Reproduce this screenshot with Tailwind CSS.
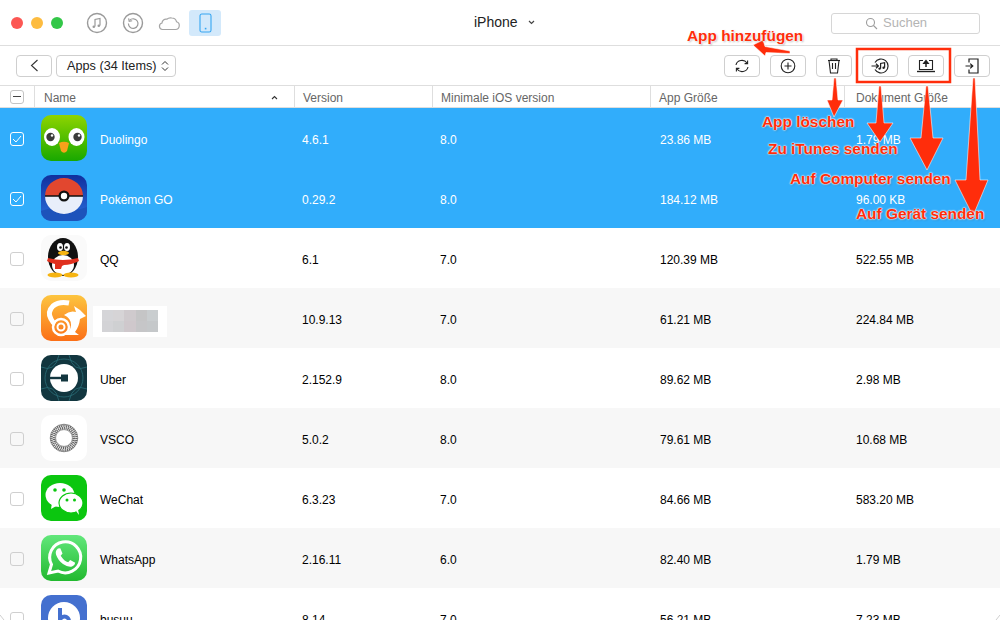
<!DOCTYPE html>
<html lang="de">
<head>
  <meta charset="UTF-8" />
  <title>iPhone Apps</title>
  <script src="https://cdn.jsdelivr.net/npm/@tailwindcss/browser@4"></script>
</head>
<body class="bg-white">
<div class="relative w-[1000px] h-[620px] overflow-hidden font-['Liberation_Sans',Arial,sans-serif] text-[12px] text-black">

  <!-- title bar -->
  <div class="h-[46px] flex items-center border-b border-[#dedede] pl-[11px] pr-[20px]">
    <div class="flex gap-[8px]">
      <span class="w-3 h-3 rounded-full bg-[#fc5753]"></span>
      <span class="w-3 h-3 rounded-full bg-[#fdbc40]"></span>
      <span class="w-3 h-3 rounded-full bg-[#33c748]"></span>
    </div>
    <div class="flex items-center ml-[21px] gap-[4px]">
      <svg class="w-[26px] h-[26px]" viewBox="0 0 26 26" fill="none" stroke="#9a9a9a">
        <circle cx="13" cy="13" r="9.5" stroke-width="1.4"/>
        <path d="M11 16.500V9.500l5-1v7" stroke-width="1.200"/>
        <circle cx="9.800" cy="16.700" r="1.300" fill="#9a9a9a" stroke="none"/>
        <circle cx="14.800" cy="15.700" r="1.300" fill="#9a9a9a" stroke="none"/>
      </svg>
      <svg class="ml-[6px] w-[26px] h-[26px]" viewBox="0 0 26 26" fill="none" stroke="#9a9a9a">
        <circle cx="13" cy="13" r="9.5" stroke-width="1.4"/>
        <path d="M9.600 10.400A4.800 4.800 0 1 1 8.400 13.600" stroke-width="1.200"/>
        <path d="M8.600 8.400l.6 3 3-.6" stroke-width="1.100"/>
      </svg>
      <svg class="ml-[7px] w-[24px] h-[16px]" viewBox="0 0 24 16" fill="none" stroke="#a5a5a5" stroke-width="1.200">
        <path d="M5.500 14.500h13a4 4 0 0 0 1-7.800A5 5 0 0 0 14.800 3a5.500 5.500 0 0 0-5 1.200A4 4 0 0 0 5 8a3.300 3.300 0 0 0 .5 6.500z"/>
      </svg>
      <div class="ml-[4px] w-[32px] h-[26px] rounded-[3px] bg-[#d3e9fb] flex items-center justify-center">
        <svg class="w-[13px] h-[20px]" viewBox="0 0 13 20" fill="none">
          <rect x="1" y="1" width="11" height="18" rx="1.800" stroke="#36a6f2" stroke-width="1.100"/>
          <rect x="5.800" y="14.800" width="1.600" height="1.600" fill="#36a6f2"/>
        </svg>
      </div>
    </div>
    <div class="absolute left-[474px] top-[12px] flex items-center gap-[10px] text-[14px] text-[#222]">
      <span>iPhone</span>
      <svg class="w-[7px] h-[5px]" viewBox="0 0 7 5" fill="none" stroke="#444" stroke-width="1.200"><path d="M1 1l2.500 2.500L6 1"/></svg>
    </div>
    <div class="ml-auto w-[149px] h-[21px] border border-[#d6d6d6] rounded-[3px] flex items-center pl-[33px] gap-[5px] text-[13px] text-[#b4b4b4] mt-[1px]">
      <svg class="w-[13px] h-[13px]" viewBox="0 0 13 13" fill="none" stroke="#9c9c9c" stroke-width="1.100"><circle cx="5.500" cy="5.500" r="4"/><path d="M8.500 8.500l3.500 3.500"/></svg>
      <span>Suchen</span>
    </div>
  </div>

  <!-- toolbar -->
  <div class="h-[40px] flex items-center border-b border-[#dedede] pl-[16px] pr-[10px]">
    <button class="w-[36px] h-[22px] border border-[#cfcfcf] rounded-[4px] flex items-center justify-center">
      <svg class="w-[9px] h-[13px]" viewBox="0 0 9 13" fill="none" stroke="#333" stroke-width="1.100"><path d="M7.500 1L1.500 6.500l6 5.500"/></svg>
    </button>
    <button class="ml-[4px] w-[120px] h-[22px] border border-[#cfcfcf] rounded-[4px] flex items-center pl-[10px] gap-[4px] text-[12.7px] text-[#222]">
      <span class="translate-y-px">Apps (34 Items)</span>
      <svg class="w-[8px] h-[12px]" viewBox="0 0 8 12" fill="none" stroke="#333"><path d="M1 4.500L4 1.500l3 3M1 7.500l3 3 3-3"/></svg>
    </button>
    <div class="ml-auto flex gap-[10px]">
      <button class="w-[36px] h-[22px] border border-[#cfcfcf] rounded-[4px] flex items-center justify-center">
        <svg class="w-[16px] h-[14px]" viewBox="0 0 16 14" fill="none" stroke="#222" stroke-width="1.100"><path d="M2 6a6 5.500 0 0 1 11-2"/><path d="M14 8a6 5.500 0 0 1-11 2"/><path d="M13.600 1.500V4.600H10.600"/><path d="M2.400 12.500V9.400H5.400"/></svg>
      </button>
      <button class="w-[36px] h-[22px] border border-[#cfcfcf] rounded-[4px] flex items-center justify-center">
        <svg class="w-[16px] h-[16px]" viewBox="0 0 16 16" fill="none" stroke="#222" stroke-width="1.100"><circle cx="8" cy="8" r="6.800"/><path d="M8 4.500v7M4.500 8h7"/></svg>
      </button>
      <button class="w-[36px] h-[22px] border border-[#cfcfcf] rounded-[4px] flex items-center justify-center">
        <svg class="w-[14px] h-[16px]" viewBox="0 0 14 16" fill="none" stroke="#222" stroke-width="1.100"><path d="M1 2.500h12"/><path d="M4 2.500V1h6v1.500"/><path d="M2 2.500l1.500 12.500h7L12 2.500"/><path d="M5.500 5v6M8.500 5v6"/></svg>
      </button>
      <button class="w-[36px] h-[22px] border border-[#cfcfcf] rounded-[4px] flex items-center justify-center">
        <svg class="w-[18px] h-[16px]" viewBox="0 0 18 16" fill="none" stroke="#222" stroke-width="1.200"><path d="M4 4.500A7 7 0 1 1 4 11.500"/><path d="M0.500 8h6.500M5 5.800L7.400 8 5 10.200"/><path d="M9.600 10.500V5.500l4-.8v5"/><circle cx="8.600" cy="10.600" r="1.200" fill="#222" stroke="none"/><circle cx="12.600" cy="9.800" r="1.200" fill="#222" stroke="none"/></svg>
      </button>
      <button class="w-[36px] h-[22px] border border-[#cfcfcf] rounded-[4px] flex items-center justify-center">
        <svg class="w-[18px] h-[14px]" viewBox="0 0 18 14" fill="none" stroke="#222" stroke-width="1.100"><path d="M6 1.500H2.500v9h13v-9H12"/><path d="M0 12.500h18" stroke-width="1.400"/><path d="M9 8V3" stroke-width="1.500"/><path d="M6.600 4.400L9 1.400l2.400 3z" fill="#222"/></svg>
      </button>
      <button class="w-[36px] h-[22px] border border-[#cfcfcf] rounded-[4px] flex items-center justify-center">
        <svg class="w-[14px] h-[16px]" viewBox="0 0 14 16" fill="none" stroke="#222" stroke-width="1.200"><path d="M4 4.500V1h9v14H4v-3.500"/><path d="M0.500 8h7M5.200 5.600L7.800 8l-2.600 2.400"/></svg>
      </button>
    </div>
  </div>

  <!-- table header -->
  <div class="h-[22px] grid grid-cols-[35px_260px_138px_218px_194px_155px] items-center text-[#666] border-b border-[#dedede]">
    <div class="h-full flex items-center justify-center border-r border-[#dedede] pr-px">
      <span class="w-[14px] h-[14px] border border-[#c4c4c4] rounded-[3px] flex items-center justify-center"><span class="w-[8px] h-[1.5px] bg-[#444]"></span></span>
    </div>
    <div class="h-full flex items-center justify-between pl-[9px] pr-[16px] pt-[2px] border-r border-[#dedede]">
      <span>Name</span>
      <svg class="w-[7px] h-[5px]" viewBox="0 0 7 5" fill="none" stroke="#333" stroke-width="1.100"><path d="M1 4l2.500-2.500L6 4"/></svg>
    </div>
    <div class="h-full flex items-center pl-[8px] pt-[2px] border-r border-[#dedede]">Version</div>
    <div class="h-full flex items-center pl-[8px] pt-[2px] border-r border-[#dedede]">Minimale iOS version</div>
    <div class="h-full flex items-center pl-[8px] pt-[2px] border-r border-[#dedede]">App Größe</div>
    <div class="h-full flex items-center pl-[11px] pt-[2px]">Dokument Größe</div>
  </div>

  <!-- rows -->
  <div class="h-[60px] pt-[4px] grid grid-cols-[34px_260px_138px_218px_194px_156px] items-center bg-[#31adfb] text-white">
    <div class="flex justify-center -translate-y-px"><span class="w-[14px] h-[14px] border border-white rounded-[3px] flex items-center justify-center"><svg class="w-[10px] h-[8px]" viewBox="0 0 10 8" fill="none" stroke="white"><path d="M1 4l3 3 5-6"/></svg></span></div>
    <div class="flex items-center pl-[7px] gap-[13px]">
      <svg class="w-[46px] h-[46px] rounded-[10px] -translate-y-[2px]" viewBox="0 0 46 46">
        <defs><linearGradient id="duo" x1="0" y1="0" x2="0" y2="1"><stop offset="0" stop-color="#8fd400"/><stop offset="1" stop-color="#18a800"/></linearGradient></defs>
        <rect width="46" height="46" fill="url(#duo)"/>
        <ellipse cx="11" cy="22" rx="8" ry="9" fill="white"/><ellipse cx="35.500" cy="22" rx="8" ry="9" fill="white"/>
        <circle cx="9.500" cy="22" r="4.200" fill="#3c3c3c"/><circle cx="36.500" cy="22" r="4.200" fill="#3c3c3c"/>
        <circle cx="11" cy="20.500" r="1.200" fill="white"/><circle cx="38" cy="20.500" r="1.200" fill="white"/>
        <path d="M18 28q5-2.500 10 0l-2 8q-3 3.500-6 0z" fill="#f9a11b"/>
      </svg>
      <span>Duolingo</span>
    </div>
    <div class="pl-[8px]">4.6.1</div><div class="pl-[8px]">8.0</div><div class="pl-[10px]">23.86 MB</div><div class="pl-[12px]">1.79 MB</div>
  </div>

  <div class="h-[60px] pt-[4px] grid grid-cols-[34px_260px_138px_218px_194px_156px] items-center bg-[#31adfb] text-white">
    <div class="flex justify-center -translate-y-px"><span class="w-[14px] h-[14px] border border-white rounded-[3px] flex items-center justify-center"><svg class="w-[10px] h-[8px]" viewBox="0 0 10 8" fill="none" stroke="white"><path d="M1 4l3 3 5-6"/></svg></span></div>
    <div class="flex items-center pl-[7px] gap-[13px]">
      <svg class="w-[46px] h-[46px] rounded-[10px] -translate-y-[2px]" viewBox="0 0 46 46">
        <defs><linearGradient id="pgo" x1="0" y1="0" x2="0" y2="1"><stop offset="0" stop-color="#102f9e"/><stop offset="1" stop-color="#2a6fdc"/></linearGradient></defs>
        <rect width="46" height="46" fill="url(#pgo)"/>
        <path d="M0 36q12-5 23-2t23-2v14H0z" fill="#1d53bb"/>
        <path d="M4 21a19 18 0 0 1 38 0z" fill="#e2472f"/>
        <path d="M4 21a19 18 0 0 0 38 0z" fill="#e8eefa"/>
        <path d="M4 21h38" stroke="#111" stroke-width="1.500"/>
        <circle cx="23" cy="21" r="5.500" fill="#111"/><circle cx="23" cy="21" r="3.200" fill="white"/>
      </svg>
      <span>Pokémon GO</span>
    </div>
    <div class="pl-[8px]">0.29.2</div><div class="pl-[8px]">8.0</div><div class="pl-[10px]">184.12 MB</div><div class="pl-[12px]">96.00 KB</div>
  </div>

  <div class="h-[60px] pt-[4px] grid grid-cols-[34px_260px_138px_218px_194px_156px] items-center bg-white">
    <div class="flex justify-center -translate-y-px"><span class="w-[14px] h-[14px] border border-[#cfcfcf] rounded-[3px]"></span></div>
    <div class="flex items-center pl-[7px] gap-[13px]">
      <svg class="w-[46px] h-[46px] rounded-[10px] -translate-y-[2px]" viewBox="0 0 46 46">
        <rect width="46" height="46" fill="#fafafa"/>
        <ellipse cx="22" cy="22" rx="15" ry="19" fill="#111"/>
        <ellipse cx="22" cy="30" rx="11" ry="10" fill="white"/>
        <ellipse cx="19" cy="12" rx="3" ry="4" fill="white"/><ellipse cx="26" cy="12" rx="3" ry="4" fill="white"/>
        <circle cx="19.500" cy="12.500" r="1.300" fill="#111"/><circle cx="25.500" cy="12.500" r="1.300" fill="#111"/>
        <ellipse cx="22.500" cy="18" rx="5.500" ry="2.200" fill="#f6b411"/>
        <path d="M7 23q15 4 30 0l1 3q-8 4-15 4l-2 1-1 3h-6v-5q-5-1-8-3z" fill="#e0301e"/>
        <ellipse cx="14" cy="40" rx="7.500" ry="2.500" fill="#f6b411"/><ellipse cx="30" cy="40" rx="7.500" ry="2.500" fill="#f6b411"/>
      </svg>
      <span>QQ</span>
    </div>
    <div class="pl-[8px]">6.1</div><div class="pl-[8px]">7.0</div><div class="pl-[10px]">120.39 MB</div><div class="pl-[12px]">522.55 MB</div>
  </div>

  <div class="h-[60px] pt-[4px] grid grid-cols-[34px_260px_138px_218px_194px_156px] items-center bg-[#f7f7f7]">
    <div class="flex justify-center -translate-y-px"><span class="w-[14px] h-[14px] border border-[#cfcfcf] rounded-[3px]"></span></div>
    <div class="flex items-center pl-[7px]">
      <svg class="w-[46px] h-[46px] rounded-[10px] -translate-y-[2px]" viewBox="0 0 46 46">
        <defs><linearGradient id="uc" x1="0" y1="0" x2="0" y2="1"><stop offset="0" stop-color="#fdc53f"/><stop offset="1" stop-color="#fb6f17"/></linearGradient></defs>
        <rect width="46" height="46" fill="url(#uc)"/>
        <path d="M28 8q-10-2-16 3-6 6-2 13 2 4 4 5" fill="none" stroke="white" stroke-width="5"/>
        <path d="M23 20q6-5 12-3l-2-6 6 4 6 6-6 3q-1 8-5 13l4 3H21q9-3 9-10 0-7-7-10z" fill="white"/>
        <circle cx="20" cy="32" r="8" fill="none" stroke="white" stroke-width="2.500"/>
        <circle cx="20" cy="32" r="3.500" fill="none" stroke="white" stroke-width="2"/>
      </svg>
      <div class="ml-[6px] w-[74px] h-[31px] bg-white flex items-center justify-center translate-y-px">
        <div class="grid grid-cols-5 w-[56px] h-[22px] blur-[0.6px]">
          <span class="bg-[#d5d5d8]"></span><span class="bg-[#d6d4d6]"></span><span class="bg-[#cfcacd]"></span><span class="bg-[#c5c5c6]"></span><span class="bg-[#c9cdcf]"></span>
          <span class="bg-[#d3d3d6]"></span><span class="bg-[#cfd0d2]"></span><span class="bg-[#cfc8cc]"></span><span class="bg-[#c6c6c8]"></span><span class="bg-[#c5c8ca]"></span>
        </div>
      </div>
    </div>
    <div class="pl-[8px]">10.9.13</div><div class="pl-[8px]">7.0</div><div class="pl-[10px]">61.21 MB</div><div class="pl-[12px]">224.84 MB</div>
  </div>

  <div class="h-[60px] pt-[4px] grid grid-cols-[34px_260px_138px_218px_194px_156px] items-center bg-white">
    <div class="flex justify-center -translate-y-px"><span class="w-[14px] h-[14px] border border-[#cfcfcf] rounded-[3px]"></span></div>
    <div class="flex items-center pl-[7px] gap-[13px]">
      <svg class="w-[46px] h-[46px] rounded-[10px] -translate-y-[2px]" viewBox="0 0 46 46">
        <rect width="46" height="46" fill="#12363f"/>
        <g fill="none" stroke="#2b6f78" stroke-width="0.800"><circle cx="23" cy="23" r="19"/><path d="M0 12q14 6 18-12M46 12q-14 6-18-12M0 34q14-6 18 12M46 34q-14-6-18 12"/></g>
        <circle cx="23" cy="23" r="14" fill="white"/>
        <rect x="9" y="21.800" width="12" height="2.400" fill="#12363f"/>
        <rect x="20" y="19.500" width="7" height="7" fill="#12363f"/>
      </svg>
      <span>Uber</span>
    </div>
    <div class="pl-[8px]">2.152.9</div><div class="pl-[8px]">8.0</div><div class="pl-[10px]">89.62 MB</div><div class="pl-[12px]">2.98 MB</div>
  </div>

  <div class="h-[60px] pt-[4px] grid grid-cols-[34px_260px_138px_218px_194px_156px] items-center bg-[#f7f7f7]">
    <div class="flex justify-center -translate-y-px"><span class="w-[14px] h-[14px] border border-[#cfcfcf] rounded-[3px]"></span></div>
    <div class="flex items-center pl-[7px] gap-[13px]">
      <svg class="w-[46px] h-[46px] rounded-[10px] -translate-y-[2px]" viewBox="0 0 46 46">
        <rect width="46" height="46" fill="white"/>
        <g fill="none" stroke="#666">
          <circle cx="23" cy="23" r="12.500" stroke-width="2.600" stroke-dasharray="1.200 0.700"/>
          <circle cx="23" cy="23" r="9.800" stroke-width="2.600" stroke-dasharray="1.200 0.700"/>
          <circle cx="23" cy="23" r="13.800" stroke-width="0.600"/>
          <circle cx="23" cy="23" r="8.400" stroke-width="0.600"/>
        </g>
      </svg>
      <span>VSCO</span>
    </div>
    <div class="pl-[8px]">5.0.2</div><div class="pl-[8px]">8.0</div><div class="pl-[10px]">79.61 MB</div><div class="pl-[12px]">10.68 MB</div>
  </div>

  <div class="h-[60px] pt-[4px] grid grid-cols-[34px_260px_138px_218px_194px_156px] items-center bg-white">
    <div class="flex justify-center -translate-y-px"><span class="w-[14px] h-[14px] border border-[#cfcfcf] rounded-[3px]"></span></div>
    <div class="flex items-center pl-[7px] gap-[13px]">
      <svg class="w-[46px] h-[46px] rounded-[10px] -translate-y-[2px]" viewBox="0 0 46 46">
        <rect width="46" height="46" fill="#0bc60f"/>
        <ellipse cx="19" cy="20" rx="14.500" ry="12" fill="white"/>
        <path d="M11 28l-1 6 7-4z" fill="white"/>
        <circle cx="14" cy="15" r="1.800" fill="#0bc60f"/><circle cx="23" cy="15" r="1.800" fill="#0bc60f"/>
        <ellipse cx="30" cy="28" rx="12" ry="10" fill="white" stroke="#0bc60f" stroke-width="1.200"/>
        <path d="M35 36l3 4-1-6z" fill="white"/>
        <circle cx="26" cy="25" r="1.500" fill="#0bc60f"/><circle cx="33.500" cy="25" r="1.500" fill="#0bc60f"/>
      </svg>
      <span>WeChat</span>
    </div>
    <div class="pl-[8px]">6.3.23</div><div class="pl-[8px]">7.0</div><div class="pl-[10px]">84.66 MB</div><div class="pl-[12px]">583.20 MB</div>
  </div>

  <div class="h-[60px] pt-[4px] grid grid-cols-[34px_260px_138px_218px_194px_156px] items-center bg-[#f7f7f7]">
    <div class="flex justify-center -translate-y-px"><span class="w-[14px] h-[14px] border border-[#cfcfcf] rounded-[3px]"></span></div>
    <div class="flex items-center pl-[7px] gap-[13px]">
      <svg class="w-[46px] h-[46px] rounded-[10px] -translate-y-[2px]" viewBox="0 0 46 46">
        <defs><linearGradient id="wa" x1="0" y1="0" x2="0" y2="1"><stop offset="0" stop-color="#62e77b"/><stop offset="1" stop-color="#22b92f"/></linearGradient></defs>
        <rect width="46" height="46" fill="url(#wa)"/>
        <path d="M8 38l2.500-8.500A15.500 15.500 0 1 1 17 36z" fill="none" stroke="white" stroke-width="3"/>
        <path d="M17 13.500q-3 2-2 6 2 6 7 9.500 5 3.500 9 2.500 3-1 3.200-3.800l-5-2.700-2 2.300q-4-1-7.500-6.500l1.800-2.300-2.200-5.200z" fill="white"/>
      </svg>
      <span>WhatsApp</span>
    </div>
    <div class="pl-[8px]">2.16.11</div><div class="pl-[8px]">6.0</div><div class="pl-[10px]">82.40 MB</div><div class="pl-[12px]">1.79 MB</div>
  </div>

  <div class="h-[60px] pt-[4px] grid grid-cols-[34px_260px_138px_218px_194px_156px] items-center bg-white">
    <div class="flex justify-center -translate-y-px"><span class="w-[14px] h-[14px] border border-[#cfcfcf] rounded-[3px]"></span></div>
    <div class="flex items-center pl-[7px] gap-[13px]">
      <svg class="w-[46px] h-[46px] rounded-[10px] -translate-y-[2px]" viewBox="0 0 46 46">
        <rect width="46" height="46" fill="#4470cf"/>
        <circle cx="23" cy="23" r="16" fill="white"/>
        <path d="M19 13v13" stroke="#4470cf" stroke-width="4"/>
        <circle cx="23.500" cy="26" r="4.500" fill="none" stroke="#4470cf" stroke-width="4"/>
      </svg>
      <span>busuu</span>
    </div>
    <div class="pl-[8px]">8.14</div><div class="pl-[8px]">7.0</div><div class="pl-[10px]">56.21 MB</div><div class="pl-[12px]">7.23 MB</div>
  </div>

  <!-- annotations over the screenshot -->
  <svg class="absolute left-0 top-0 w-[1000px] h-[620px] pointer-events-none" viewBox="0 0 1000 620">
    <g fill="#ff2d0b" stroke="white" stroke-opacity="0.700" stroke-width="0.800">
      <path d="M753 45l10-5 2 6.500 25 4.500v2.500l-24-1-1 3.500z"/>
      <path d="M834 78h2l2 22h5l-9 17-7-17h5z"/>
      <path d="M879 86h2l3 37h9l-13 19-13-19h9z"/>
      <path d="M926 86h2l5 52h10l-16 32-17-32h11z"/>
      <path d="M973 78h2l5 102h8l-15 36-18-36h11z"/>
    </g>
    <rect x="857" y="49" width="93" height="33" fill="none" stroke="#ff2d0b" stroke-width="2.500"/>
    <path d="M0 615l4 5M1000 615l-4 5" stroke="#cfcfcf" stroke-width="1"/>
  </svg>
  <div class="absolute left-[687px] top-[24px] text-[15.4px] font-bold text-[#ff2d0b] [text-shadow:0_0_2px_white,0_0_2px_white,0_0_1px_white,1px_1px_2px_rgba(0,0,0,0.3)]">App hinzufügen</div>
  <div class="absolute left-[762px] top-[110px] text-[15.4px] font-bold text-[#ff2d0b] [text-shadow:0_0_2px_white,0_0_2px_white,0_0_1px_white,1px_1px_2px_rgba(0,0,0,0.3)]">App löschen</div>
  <div class="absolute left-[768px] top-[137px] text-[15.4px] font-bold text-[#ff2d0b] [text-shadow:0_0_2px_white,0_0_2px_white,0_0_1px_white,1px_1px_2px_rgba(0,0,0,0.3)]">Zu iTunes senden</div>
  <div class="absolute left-[790px] top-[167px] text-[15.4px] font-bold text-[#ff2d0b] [text-shadow:0_0_2px_white,0_0_2px_white,0_0_1px_white,1px_1px_2px_rgba(0,0,0,0.3)]">Auf Computer senden</div>
  <div class="absolute left-[856px] top-[202px] text-[15.4px] font-bold text-[#ff2d0b] [text-shadow:0_0_2px_white,0_0_2px_white,0_0_1px_white,1px_1px_2px_rgba(0,0,0,0.3)]">Auf Gerät senden</div>
</div>
</body>
</html>
